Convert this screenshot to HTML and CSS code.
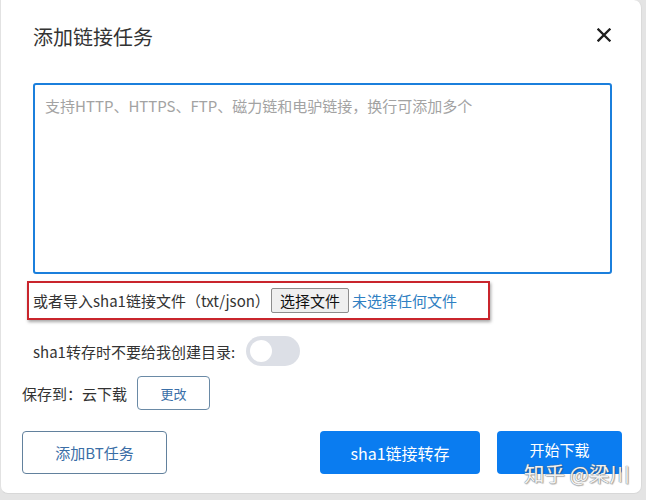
FILE: index.html
```html
<!DOCTYPE html>
<html lang="zh-CN">
<head>
<meta charset="utf-8">
<title>添加链接任务</title>
<link rel="stylesheet" href="styles.css">
</head>
<body>
<div class="dialog">
  <div class="header">
    <h1 class="title">添加链接任务</h1>
    <button class="close" aria-label="关闭">
      <svg width="14" height="14" viewBox="0 0 14 14"><path d="M1.5 1.5 L12.5 12.5 M12.5 1.5 L1.5 12.5" stroke="#1f1f1f" stroke-width="2.3" stroke-linecap="square" fill="none"/></svg>
    </button>
  </div>
  <textarea class="links" placeholder="支持HTTP、HTTPS、FTP、磁力链和电驴链接，换行可添加多个"></textarea>
  <div class="import">
    <span class="import-label">或者导入sha1链接文件（txt/json）</span>
    <span class="file-btn">选择文件</span>
    <span class="file-none">未选择任何文件</span>
  </div>
  <div class="toggle-row">
    <span class="toggle-label">sha1转存时不要给我创建目录:</span>
    <span class="switch"><span class="knob"></span></span>
  </div>
  <div class="save-row">
    <span class="save-label">保存到：云下载</span>
    <button class="change">更改</button>
  </div>
  <div class="footer">
    <button class="btn btn-outline">添加BT任务</button>
    <div class="footer-right">
      <button class="btn btn-primary btn-sha">sha1链接转存</button>
      <button class="btn btn-primary btn-start">开始下载</button>
    </div>
  </div>
  <div class="watermark">知乎 @梁川</div>
</div>
</body>
</html>
```

FILE: styles.css
```css
html, body {
  margin: 0;
  padding: 0;
}
body {
  width: 646px;
  height: 500px;
  background: #e4e4e4;
  font-family: "Noto Sans CJK SC", "Microsoft YaHei", sans-serif;
  color: #333;
  overflow: hidden;
}
.dialog {
  position: relative;
  box-sizing: border-box;
  width: 642px;
  height: 494px;
  background: #fff;
  border-radius: 0 8px 8px 8px;
  border-left: 1px solid #e2e2e2;
  border-right: 1px solid #dadada;
  border-bottom: 1px solid #d8d8d8;
  display: flex;
  flex-direction: column;
}
.header {
  display: flex;
  align-items: center;
  justify-content: space-between;
  padding: 23px 30px 0 32px;
  height: 28px;
}
.title {
  margin: 0;
  font-size: 20px;
  font-weight: normal;
  line-height: 28px;
  color: #333;
}
.close {
  border: 0;
  background: none;
  padding: 0;
  width: 14px;
  height: 14px;
  display: flex;
  margin-top: -4px;
}
.links {
  display: block;
  box-sizing: border-box;
  margin: 32px 0 0 32px;
  width: 579px;
  height: 191px;
  border: 2px solid #1b7fdc;
  border-radius: 3px;
  padding: 10px 10px;
  font-family: "Noto Sans CJK SC", sans-serif;
  font-size: 15px;
  line-height: 22px;
  resize: none;
  outline: none;
  color: #333;
}
.links::placeholder {
  color: #a3a3a3;
}
.import {
  box-sizing: border-box;
  margin: 7px 0 0 26px;
  width: 463px;
  height: 39px;
  border: 2px solid #c9252c;
  box-shadow: 1px 2px 3px rgba(0, 0, 0, 0.35);
  display: flex;
  align-items: center;
  padding-left: 4px;
  font-size: 15px;
  line-height: 20px;
}
.import-label {
  color: #333;
  margin-right: 1px;
}
.file-btn {
  box-sizing: border-box;
  height: 25px;
  padding: 0 8px;
  display: flex;
  align-items: center;
  background: #efefef;
  border: 1px solid #8d8d8d;
  border-radius: 2px;
  color: #111;
  margin-right: 3px;
}
.file-none {
  color: #2f80c2;
}
.toggle-row {
  display: flex;
  align-items: center;
  margin: 16px 0 0 32px;
  height: 30px;
  font-size: 15px;
}
.toggle-label {
  color: #333;
  margin-right: 11px;
}
.switch {
  box-sizing: border-box;
  width: 54px;
  height: 30px;
  border-radius: 15px;
  background: #dcdfe6;
  padding: 4px;
  display: flex;
}
.knob {
  width: 22px;
  height: 22px;
  border-radius: 50%;
  background: #fff;
}
.save-row {
  display: flex;
  align-items: center;
  margin: 10px 0 0 21px;
  height: 34px;
  font-size: 15px;
}
.save-label {
  color: #333;
  margin-right: 10px;
}
.change {
  box-sizing: border-box;
  width: 73px;
  height: 34px;
  border: 1px solid #6a8aa6;
  border-radius: 4px;
  background: #fff;
  color: #3a6fa8;
  font-family: inherit;
  font-size: 13px;
  padding: 0;
}
.footer {
  display: flex;
  justify-content: space-between;
  margin: 21px 19px 0 21px;
}
.footer-right {
  display: flex;
  gap: 17px;
}
.btn {
  box-sizing: border-box;
  height: 43px;
  border-radius: 4px;
  font-family: inherit;
  font-size: 15px;
  padding: 0;
}
.btn-outline {
  width: 145px;
  background: #fff;
  border: 1px solid #62819d;
  color: #3b6ea6;
}
.btn-primary {
  background: #0a7cf0;
  border: 0;
  color: #fff;
}
.btn-sha {
  width: 160px;
  font-size: 16px;
}
.btn-start {
  width: 125px;
  padding-bottom: 6px;
}
.watermark {
  position: absolute;
  left: 523px;
  top: 459px;
  font-size: 20.5px;
  line-height: 28px;
  color: rgba(255, 255, 255, 0.92);
  text-shadow: 0 0 1px #777, 0 0 1px #777, 1px 1px 1px rgba(0,0,0,0.25);
  letter-spacing: 0;
}
```
